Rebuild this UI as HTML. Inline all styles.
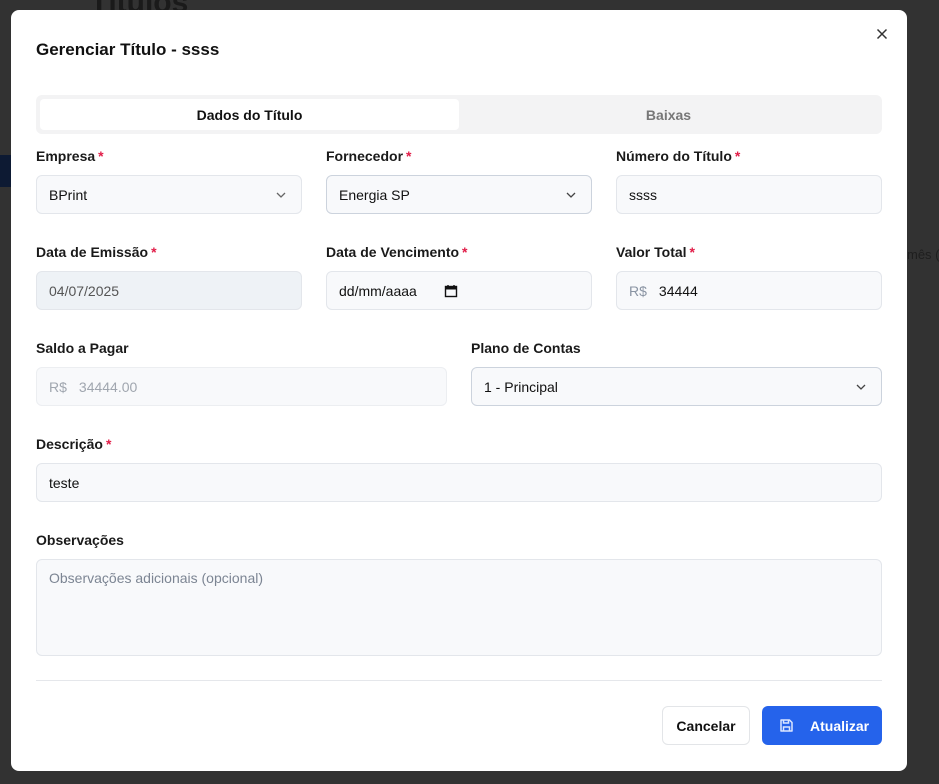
<!DOCTYPE html>
<html><head><meta charset="utf-8"><style>
*{box-sizing:border-box;margin:0;padding:0}
body{width:939px;height:784px;background:#323232;font-family:"Liberation Sans",sans-serif;position:relative;overflow:hidden;color:#111}
.bg{position:absolute;color:#1a1a1a;white-space:nowrap}
.modal{position:absolute;left:11px;top:10px;width:896px;height:761px;background:#fff;border-radius:8px}
.a{position:absolute}
.lbl{position:absolute;font-size:14px;font-weight:bold;color:#1a1a1a}
.lbl i{color:#e11d48;font-style:normal;margin-left:3px}
.in{position:absolute;height:39px;background:#f8f9fb;border:1px solid #e3e6eb;border-radius:6px;font-size:14px;padding:0 12px;display:flex;align-items:center;color:#111}
.chev{position:absolute;right:14px;top:13px}
</style></head><body>
<div class="bg" style="left:90px;top:-14px;font-size:30px;font-weight:bold">Títulos</div>
<div class="bg" style="left:0;top:155px;width:11px;height:32px;background:#0d1a33"></div>
<div class="bg" style="left:907px;top:247px;font-size:13px;color:#1e1e1e">mês (</div>
<div class="modal">
<div class="a" style="left:25px;top:30px;font-size:17px;font-weight:bold;color:#111">Gerenciar Título - ssss</div>
<svg class="a" style="left:865px;top:18px" width="12" height="12" viewBox="0 0 12 12"><path d="M1.5 1.5L10.5 10.5M10.5 1.5L1.5 10.5" stroke="#333" stroke-width="1.5"/></svg>
<div class="a" style="left:25px;top:85px;width:846px;height:39px;background:#f3f3f4;border-radius:6px"></div>
<div class="a" style="left:29px;top:89px;width:419px;height:31px;background:#fff;border-radius:4px;font-size:14px;font-weight:bold;display:flex;align-items:center;justify-content:center">Dados do Título</div>
<div class="a" style="left:448px;top:89px;width:419px;height:31px;font-size:14px;font-weight:bold;color:#777;display:flex;align-items:center;justify-content:center">Baixas</div>
</div>
<div class="lbl" style="left:36px;top:148px">Empresa<i>*</i></div>
<div class="lbl" style="left:326px;top:148px">Fornecedor<i>*</i></div>
<div class="lbl" style="left:616px;top:148px">Número do Título<i>*</i></div>
<div class="in" style="left:36px;top:175px;width:266px">BPrint<svg class="chev" width="12" height="12" viewBox="0 0 12 12"><path d="M2 4l4 4 4-4" fill="none" stroke="#666" stroke-width="1.3"/></svg></div>
<div class="in" style="left:326px;top:175px;width:266px;border-color:#ccd3dd">Energia SP<svg class="chev" width="12" height="12" viewBox="0 0 12 12"><path d="M2 4l4 4 4-4" fill="none" stroke="#444" stroke-width="1.3"/></svg></div>
<div class="in" style="left:616px;top:175px;width:266px">ssss</div>
<div class="lbl" style="left:36px;top:244px">Data de Emissão<i>*</i></div>
<div class="lbl" style="left:326px;top:244px">Data de Vencimento<i>*</i></div>
<div class="lbl" style="left:616px;top:244px">Valor Total<i>*</i></div>
<div class="in" style="left:36px;top:271px;width:266px;background:#eef2f6;color:#555">04/07/2025</div>
<div class="in" style="left:326px;top:271px;width:266px">dd/mm/aaaa<svg class="a" style="left:117px;top:12px" width="14" height="14" viewBox="0 0 14 14"><rect x="1.5" y="2.5" width="11" height="10" fill="none" stroke="#111" stroke-width="1.4"/><rect x="1.5" y="2.5" width="11" height="3" fill="#111"/><path d="M4 1v2M10 1v2" stroke="#111" stroke-width="1.4"/></svg></div>
<div class="in" style="left:616px;top:271px;width:266px"><span style="color:#8a94a3;margin-right:12px">R$</span>34444</div>
<div class="lbl" style="left:36px;top:340px">Saldo a Pagar</div>
<div class="lbl" style="left:471px;top:340px">Plano de Contas</div>
<div class="in" style="left:36px;top:367px;width:411px;color:#a0a6af;border-color:#eceef1"><span style="margin-right:12px">R$</span>34444.00</div>
<div class="in" style="left:471px;top:367px;width:411px;border-color:#ccd3dd">1 - Principal<svg class="chev" width="12" height="12" viewBox="0 0 12 12"><path d="M2 4l4 4 4-4" fill="none" stroke="#444" stroke-width="1.3"/></svg></div>
<div class="lbl" style="left:36px;top:436px">Descrição<i>*</i></div>
<div class="in" style="left:36px;top:463px;width:846px">teste</div>
<div class="lbl" style="left:36px;top:532px">Observações</div>
<div class="in" style="left:36px;top:559px;width:846px;height:97px;align-items:flex-start;padding-top:10px;color:#7c8593">Observações adicionais (opcional)</div>
<div class="a" style="left:36px;top:680px;width:846px;height:1px;background:#e5e7eb"></div>
<div class="a" style="left:662px;top:706px;width:88px;height:39px;border:1px solid #e3e5e8;border-radius:6px;font-size:14px;font-weight:bold;display:flex;align-items:center;justify-content:center">Cancelar</div>
<div class="a" style="left:762px;top:706px;width:120px;height:39px;background:#2563eb;border-radius:6px;font-size:14px;font-weight:bold;color:#fff;display:flex;align-items:center;padding-left:48px">Atualizar</div>
<svg class="a" style="left:779px;top:718px" width="15" height="15" viewBox="0 0 15 15"><path d="M2 2h8.5L13 4.5V13H2z" fill="none" stroke="#dbe6ff" stroke-width="1.5" stroke-linejoin="round"/><path d="M4.5 2v3h5V2M4.5 13V9h6v4" fill="none" stroke="#dbe6ff" stroke-width="1.5"/></svg>
</body></html>
